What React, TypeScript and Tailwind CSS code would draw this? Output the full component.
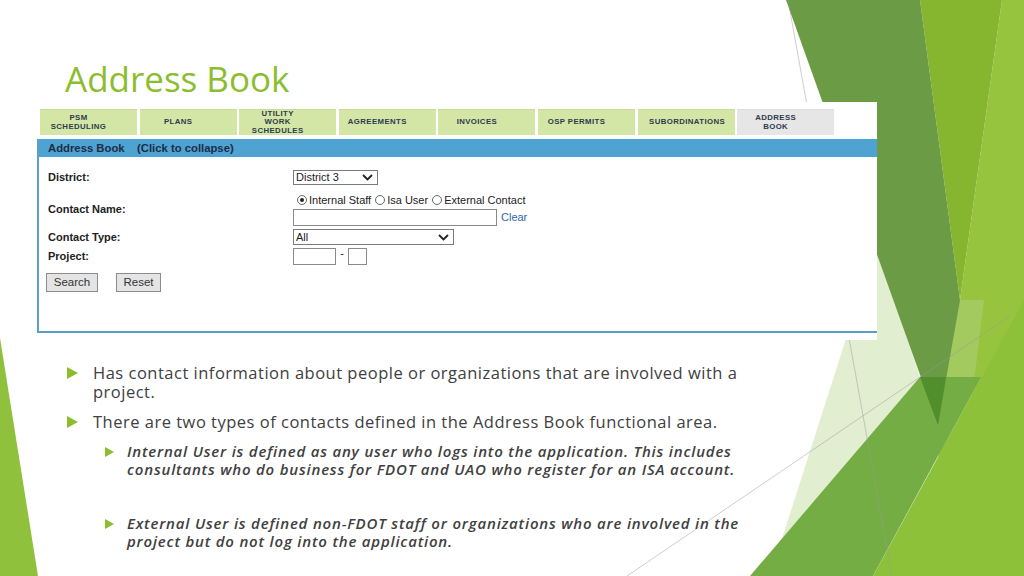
import React from "react";

const tabs = [
  ["PSM", "SCHEDULING"],
  ["PLANS"],
  ["UTILITY", "WORK", "SCHEDULES"],
  ["AGREEMENTS"],
  ["INVOICES"],
  ["OSP PERMITS"],
  ["SUBORDINATIONS"],
  ["ADDRESS", "BOOK"],
];

function Chevron() {
  return (
    <svg width="11" height="7" viewBox="0 0 11 7">
      <polyline points="1,1 5.5,5.5 10,1" fill="none" stroke="#222" strokeWidth="1.8" />
    </svg>
  );
}

function FakeSelect({ value, width }: { value: string; width: string }) {
  return (
    <div className={`${width} h-full flex items-center justify-between border border-[#7a7a7a] bg-white pl-[2px] pr-[4px] text-[11px] leading-none text-[#222]`}>
      <span>{value}</span>
      <Chevron />
    </div>
  );
}

function Radio({ checked, label }: { checked?: boolean; label: string }) {
  return (
    <span className="flex items-center gap-[2px]">
      <span className="w-[10px] h-[10px] rounded-full border border-[#666] bg-white flex items-center justify-center">
        {checked && <span className="w-[4px] h-[4px] rounded-full bg-[#222]" />}
      </span>
      <span>{label}</span>
    </span>
  );
}

function Backdrop() {
  return (
    <svg className="absolute inset-0" width="1024" height="576" viewBox="0 0 1024 576">
      <polygon points="0,338 38,576 0,576" fill="#8fc13d" />
      <polygon points="1002,0 1024,0 1024,576 940,576 938,425 960,300" fill="#97c43e" />
      <polygon points="958,300 984,300 962,480 938,425" fill="#a2ca5e" />
      <polygon points="920,0 1002,0 960,300" fill="#86b52f" />
      <polygon points="876,245 920,377 780,545" fill="#e2eed0" />
      <polygon points="920,377 981,377 873,576 750,576" fill="#75ad45" />
      <polygon points="1024,300 1024,576 873,576" fill="#8dc13a" />
      <polygon points="786,0 920,0 960,300 938,425" fill="#6b9b45" />
      <polygon points="920,377 946,377 938,425" fill="#508f2c" />
      <line x1="788" y1="0" x2="892" y2="576" stroke="#9a9a9a" strokeWidth="0.8" opacity="0.6" />
      <line x1="627" y1="576" x2="1010" y2="316" stroke="#9a9a9a" strokeWidth="0.8" opacity="0.6" />
    </svg>
  );
}

function Bullet({ small }: { small?: boolean }) {
  return small ? (
    <svg width="9" height="10" viewBox="0 0 9 10" className="shrink-0">
      <polygon points="0,0 9,5 0,10" fill="#8bbd2f" />
    </svg>
  ) : (
    <svg width="11" height="12" viewBox="0 0 11 12" className="shrink-0">
      <polygon points="0,0 11,6 0,12" fill="#8bbd2f" />
    </svg>
  );
}

export default function App() {
  return (
    <div className="relative w-[1024px] h-[576px] overflow-hidden bg-white">
      <Backdrop />
      <div className="relative flex flex-col">
        <h1 className="mt-[59px] ml-[65px] text-[35px] leading-[40px] text-[#8bbd2f] font-['Open_Sans',sans-serif]">
          Address Book
        </h1>

        {/* screenshot of the application */}
        <div className="mt-[3px] ml-[36px] w-[841px] h-[238px] bg-white flex flex-col font-['Liberation_Sans',Arial,sans-serif]">
          <div className="mt-[7px] ml-[4px] flex gap-[2.6px]">
            {tabs.map((t, i) => (
              <div
                key={i}
                className={`w-[97px] h-[26px] flex flex-col items-center justify-center border-t text-[7.8px] leading-[8.5px] font-bold tracking-[0.4px] text-[#2e3b4e] ${
                  i === 6 ? "pl-[2px]" : "pr-[20px]"
                } ${i === 7 ? "bg-[#e6e6e6] border-[#dcdcdc]" : "bg-[#d4e6a6] border-[#c9dc95]"}`}
              >
                {t.map((l) => (
                  <span key={l}>{l}</span>
                ))}
              </div>
            ))}
          </div>

          <div className="mt-[4px] ml-[1px] h-[194px] border-l-2 border-b-2 border-[#5b9fc6] flex flex-col">
            <div className="h-[18px] bg-[#4fa3d3] flex items-center pl-[9px] text-[11.3px] font-bold text-[#1c2c48]">
              <span className="w-[89px]">Address Book</span>
              <span>(Click to collapse)</span>
            </div>

            <div className="pl-[9px] pt-[13px] flex flex-col text-[11px] text-[#222]">
              <div className="h-[15px] flex items-center">
                <span className="w-[245px] font-bold">District:</span>
                <FakeSelect value="District 3" width="w-[85px]" />
              </div>

              <div className="mt-[8px] flex">
                <span className="w-[245px] font-bold pt-[8px]">Contact Name:</span>
                <div className="flex flex-col">
                  <div className="h-[14px] flex items-center gap-[4px] pl-[4px]">
                    <Radio checked label="Internal Staff" />
                    <Radio label="Isa User" />
                    <Radio label="External Contact" />
                  </div>
                  <div className="mt-[2px] flex items-center gap-[4px]">
                    <div className="w-[204px] h-[17px] border border-[#8a8a8a] bg-white" />
                    <span className="text-[#3266ae]">Clear</span>
                  </div>
                </div>
              </div>

              <div className="mt-[3px] h-[16px] flex items-center">
                <span className="w-[245px] font-bold">Contact Type:</span>
                <FakeSelect value="All" width="w-[161px]" />
              </div>

              <div className="mt-[3px] h-[17px] flex items-center">
                <span className="w-[245px] font-bold">Project:</span>
                <div className="w-[43px] h-full border border-[#8a8a8a] bg-white" />
                <span className="w-[12px] text-center leading-none -mt-[6px]">-</span>
                <div className="w-[19px] h-full border border-[#8a8a8a] bg-white" />
              </div>

              <div className="mt-[8px] -ml-[2px] flex gap-[18px]">
                <button className="w-[52px] h-[19px] border border-[#8c8c8c] bg-[#e4e4e4] text-[11.5px] text-[#333] leading-none">
                  Search
                </button>
                <button className="w-[45px] h-[19px] border border-[#8c8c8c] bg-[#e4e4e4] text-[11.5px] text-[#333] leading-none">
                  Reset
                </button>
              </div>
            </div>
          </div>
        </div>

        {/* slide text */}
        <div className="mt-[23px] ml-[67px] flex flex-col text-[#404040] font-['Open_Sans',sans-serif]">
          <div className="flex items-start gap-[15px] text-[16.5px] leading-[19px] tracking-[0.5px]">
            <span className="pt-[4px]"><Bullet /></span>
            <p>
              Has contact information about people or organizations that are involved with a
              <br />
              project.
            </p>
          </div>
          <div className="mt-[11px] flex items-start gap-[15px] text-[16.5px] leading-[19px] tracking-[0.5px]">
            <span className="pt-[4px]"><Bullet /></span>
            <p>There are two types of contacts defined in the Address Book functional area.</p>
          </div>
          <div className="mt-[12px] ml-[38px] flex items-start gap-[13px] text-[15px] leading-[17.5px] tracking-[0.8px] italic font-semibold">
            <span className="pt-[4px]"><Bullet small /></span>
            <p>
              Internal User is defined as any user who logs into the application. This includes
              <br />
              consultants who do business for FDOT and UAO who register for an ISA account.
            </p>
          </div>
          <div className="mt-[37px] ml-[38px] flex items-start gap-[13px] text-[15px] leading-[17.5px] tracking-[0.8px] italic font-semibold">
            <span className="pt-[4px]"><Bullet small /></span>
            <p>
              External User is defined non-FDOT staff or organizations who are involved in the
              <br />
              project but do not log into the application.
            </p>
          </div>
        </div>
      </div>
    </div>
  );
}
